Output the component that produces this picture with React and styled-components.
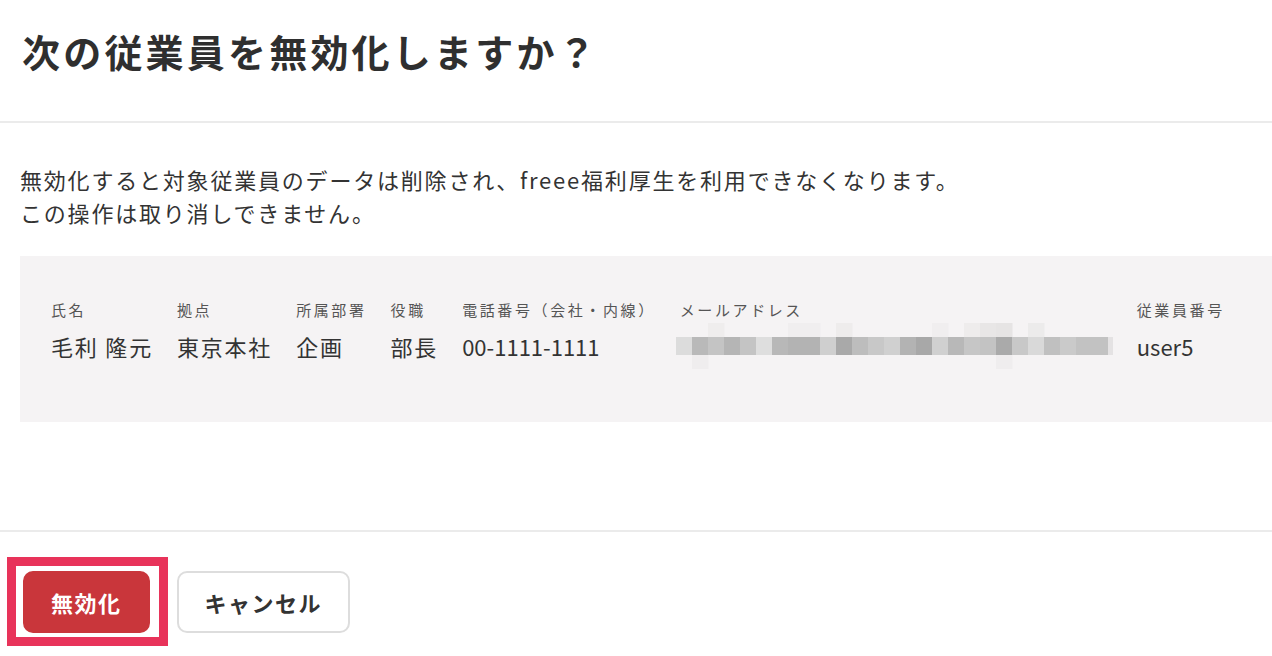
import React from 'react';
import styled, { createGlobalStyle } from 'styled-components';

// global
const GlobalStyle = createGlobalStyle`
  html, body {
    margin: 0;
    padding: 0;
    background: #ffffff;
  }
  body {
    font-family: "Noto Sans CJK JP", "Noto Sans", "Liberation Sans", sans-serif;
    color: #333333;
    overflow: hidden;
  }
`;

// data
const employee = [
  { label: '氏名', value: '毛利 隆元' },
  { label: '拠点', value: '東京本社' },
  { label: '所属部署', value: '企画' },
  { label: '役職', value: '部長' },
  { label: '電話番号（会社・内線）', value: '00-1111-1111', latin: true },
  { label: 'メールアドレス', mosaic: true },
  { label: '従業員番号', value: 'user5', latin: true },
];

const mosaicMid = [
  '#dcdcdc', '#b9b9b9', '#c4c4c4', '#b5b5b5', '#c4c4c4', '#dedede', '#b8b8b8',
  '#b3b3b3', '#b3b3b3', '#cfcfcf', '#a9a9a9', '#bdbdbd', '#c8c8c8', '#d0d0d0',
  '#b3b3b3', '#a8a8a8', '#d0d0d0', '#b8b8b8', '#c6c6c6', '#c3c3c3', '#aaaaaa',
  '#c8c8c8', '#d9d9d9', '#c0c0c0', '#cacaca', '#c2c2c2', '#c2c2c2',
];
const mosaicTop = {
  2: '#efeded', 7: '#f0eeef', 8: '#f0eeef', 10: '#eeecec', 16: '#f0eeef',
  18: '#eeecec', 19: '#e8e6e6', 20: '#e6e4e4', 22: '#ecebeb',
};
const mosaicBottom = { 1: '#efedee', 20: '#efedee' };

// style
const Page = styled.div`
  width: 1272px;
  height: 656px;
  display: flex;
  flex-direction: column;
`;

const Header = styled.header`
  height: 123px;
  display: flex;
  align-items: center;
  padding: 0 22px 20px;
  box-sizing: border-box;
  border-bottom: 2px solid #ebebeb;
`;

const Title = styled.h1`
  margin: 0;
  font-size: 38px;
  font-weight: 700;
  letter-spacing: 3.2px;
  color: #2f2f2f;
`;

const Content = styled.section`
  height: 407px;
  padding: 40px 0 0 20px;
  box-sizing: border-box;
`;

const Message = styled.p`
  margin: 0 0 27px;
  font-size: 22px;
  line-height: 33px;
  letter-spacing: 1.8px;
  color: #333333;
`;

const InfoPanel = styled.div`
  height: 166px;
  background: #f5f3f4;
  display: flex;
  gap: 24px;
  padding: 43px 0 0 31px;
  box-sizing: border-box;
`;

const InfoColumn = styled.div`
  display: flex;
  flex-direction: column;
  gap: 9px;
`;

const InfoLabel = styled.span`
  font-size: 15px;
  line-height: 22px;
  letter-spacing: 2.6px;
  color: #555555;
  white-space: nowrap;
`;

const InfoValue = styled.span`
  font-size: 22px;
  line-height: 32px;
  letter-spacing: ${(p) => (p.$latin ? '0' : '1.8px')};
  color: #333333;
  white-space: nowrap;
`;

const Mosaic = styled.svg`
  display: block;
  margin: -7px 0 -7px -4px;
`;

const Footer = styled.footer`
  flex: 1;
  border-top: 2px solid #ebebeb;
  display: flex;
  align-items: flex-start;
  gap: 27px;
  padding: 39px 0 0 23px;
`;

const Button = styled.button`
  position: relative;
  height: 62px;
  padding: 0 26px;
  border-radius: 10px;
  font-family: inherit;
  font-size: 22px;
  font-weight: 700;
  letter-spacing: 1.5px;
  border: 2px solid ${(p) => (p.$danger ? '#c9363b' : '#dddddd')};
  background: ${(p) => (p.$danger ? '#c9363b' : '#ffffff')};
  color: ${(p) => (p.$danger ? '#ffffff' : '#333333')};
  cursor: pointer;

  ${(p) =>
    p.$highlight &&
    `
    &::after {
      content: '';
      position: absolute;
      left: -18px;
      right: -20px;
      top: -16px;
      bottom: -15px;
      border: 9px solid #e8335a;
      pointer-events: none;
    }
  `}
`;

const MosaicBlocks = () => {
  const w = 16;
  return (
    <Mosaic width="437" height="46" viewBox="0 0 437 46">
      {mosaicMid.map((c, i) => (
        <rect key={`m${i}`} x={i * w} y="14" width={w + 0.5} height="18" fill={c} />
      ))}
      <rect x={27 * w} y="14" width="5" height="18" fill="#e4e2e3" />
      {Object.entries(mosaicTop).map(([i, c]) => (
        <rect key={`t${i}`} x={i * w} y="0" width={w + 0.5} height="14" fill={c} />
      ))}
      {Object.entries(mosaicBottom).map(([i, c]) => (
        <rect key={`b${i}`} x={i * w} y="32" width={w + 0.5} height="14" fill={c} />
      ))}
    </Mosaic>
  );
};

const App = () => (
  <Page>
    <GlobalStyle />
    <Header>
      <Title>次の従業員を無効化しますか？</Title>
    </Header>
    <Content>
      <Message>
        無効化すると対象従業員のデータは削除され、freee福利厚生を利用できなくなります。
        <br />
        この操作は取り消しできません。
      </Message>
      <InfoPanel>
        {employee.map((item) => (
          <InfoColumn key={item.label}>
            <InfoLabel>{item.label}</InfoLabel>
            {item.mosaic ? (
              <MosaicBlocks />
            ) : (
              <InfoValue $latin={item.latin}>{item.value}</InfoValue>
            )}
          </InfoColumn>
        ))}
      </InfoPanel>
    </Content>
    <Footer>
      <Button $danger $highlight>無効化</Button>
      <Button>キャンセル</Button>
    </Footer>
  </Page>
);

export default App;
